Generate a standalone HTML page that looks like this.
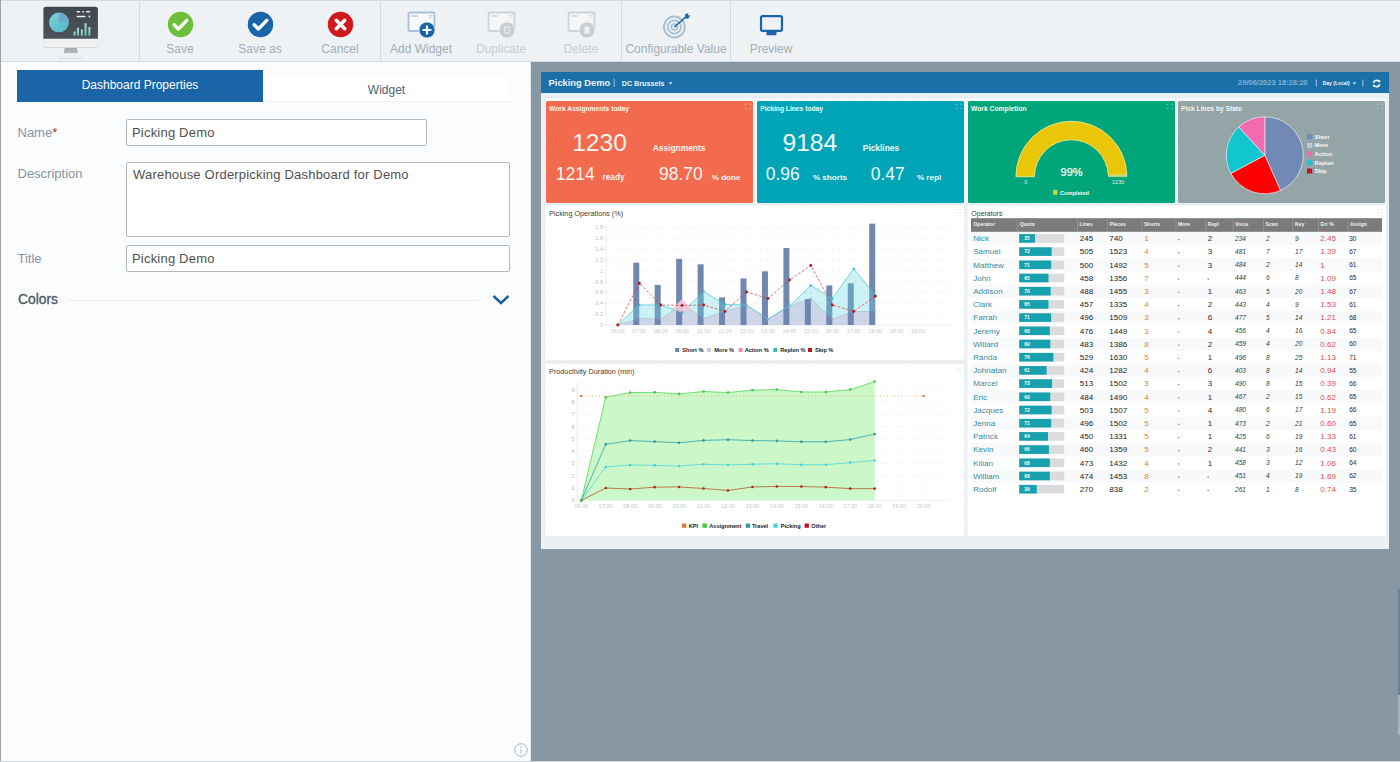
<!DOCTYPE html>
<html><head><meta charset="utf-8">
<style>
*{margin:0;padding:0;box-sizing:border-box}
html,body{width:1400px;height:762px;overflow:hidden;background:#8798a4;font-family:"Liberation Sans",sans-serif}
.a{position:absolute}
.t{position:absolute;white-space:nowrap;line-height:1}
#tb{left:0;top:0;width:1400px;height:62px;background:#eef2f5;border-top:1px solid #d6dbe0;border-bottom:1px solid #d3d9de}
.sep{position:absolute;top:1px;width:1px;height:60px;background:#d6dbe0}
.lbl{position:absolute;top:42px;font-size:12px;line-height:1;color:#a3adb7;text-align:center;white-space:nowrap}
#lp{left:0;top:62px;width:531px;height:700px;background:#fbfcfd;border-left:1px solid #8c8c8c;border-right:1px solid #e3e7eb}
.flab{position:absolute;left:16.5px;font-size:13px;line-height:1;color:#8794a0}
.inp{position:absolute;background:#fff;border:1px solid #b0bac2;border-radius:2px;font-size:13px;color:#505050;line-height:1;letter-spacing:.2px}
#db{left:541px;top:72px;width:848px;height:477px;background:#eef2f5}
#dbh{left:541px;top:72px;width:848px;height:21px;background:#1c6fab}
</style></head><body>

<!-- TOOLBAR -->
<div id="tb" class="a">
  <svg class="a" style="left:40px;top:1px" width="62" height="58" viewBox="0 0 62 58">
    <defs>
      <linearGradient id="scr" x1="0" y1="0" x2="0" y2="1"><stop offset="0" stop-color="#40474e"/><stop offset="1" stop-color="#4b5259"/></linearGradient>
      <linearGradient id="pie" x1="0" y1="0" x2="1" y2="1"><stop offset="0" stop-color="#7ed2da"/><stop offset="1" stop-color="#4fb8c6"/></linearGradient>
      <linearGradient id="bar" x1="0" y1="0" x2="0" y2="1"><stop offset="0" stop-color="#a6e2d6"/><stop offset="1" stop-color="#6cc0b0"/></linearGradient>
      <linearGradient id="std" x1="0" y1="0" x2="0" y2="1"><stop offset="0" stop-color="#9ea2a6"/><stop offset="1" stop-color="#b8bbbe"/></linearGradient>
    </defs>
    <rect x="18.5" y="52" width="24" height="5" rx="2.2" fill="#d9dcdf"/>
    <path d="M25 44.5 h11.5 l1.5 7 h-14.5 z" fill="url(#std)"/>
    <rect x="19" y="51.3" width="23.2" height="4.6" rx="2" fill="#eeeff0"/>
    <rect x="3.2" y="5" width="55" height="41" rx="2.5" fill="#d6d9dc"/>
    <rect x="3.4" y="4.8" width="54.5" height="40.3" rx="2.5" fill="#f1f1f2"/>
    <path d="M3.4 7.3 a2.5 2.5 0 0 1 2.5 -2.5 h49.5 a2.5 2.5 0 0 1 2.5 2.5 v29.4 h-54.5 z" fill="url(#scr)"/>
    <circle cx="19" cy="20.4" r="9.9" fill="url(#pie)"/>
    <path d="M19 20.4 v-9.9 a9.9 9.9 0 0 1 9.9 9.9 z" fill="#6fa9cc"/>
    <g fill="url(#bar)">
      <rect x="33.6" y="29.5" width="2" height="4.2"/>
      <rect x="37" y="25.7" width="2" height="8"/>
      <rect x="40.8" y="27.6" width="2" height="6.1"/>
      <rect x="44.6" y="21.2" width="2" height="12.5"/>
      <rect x="48.4" y="25" width="2" height="8.7"/>
    </g>
    <g fill="#eef1f3">
      <rect x="36.5" y="9" width="3.5" height="1.6" rx=".8"/>
      <rect x="42.4" y="9" width="1.4" height="1.6"/>
      <rect x="46" y="9" width="4.2" height="1.6" rx=".8"/>
      <rect x="36.5" y="13.7" width="9.1" height="1.6" rx=".8"/>
      <rect x="48.6" y="13.7" width="1.6" height="1.6"/>
    </g>
  </svg>
  <div class="sep" style="left:139px"></div>
  <!-- Save -->
  <svg class="a" style="left:167px;top:10px" width="27" height="27" viewBox="0 0 27 27"><circle cx="13.5" cy="13.5" r="12.7" fill="#6dbf3a"/><path d="M7.2 13.8 l4.2 4.2 l8.4 -8.6" fill="none" stroke="#fff" stroke-width="3.4" stroke-linecap="round" stroke-linejoin="round"/></svg>
  <div class="lbl" style="left:140px;width:80px">Save</div>
  <svg class="a" style="left:247px;top:10px" width="27" height="27" viewBox="0 0 27 27"><circle cx="13.5" cy="13.5" r="12.7" fill="#1a64a8"/><path d="M7.2 13.8 l4.2 4.2 l8.4 -8.6" fill="none" stroke="#fff" stroke-width="3.4" stroke-linecap="round" stroke-linejoin="round"/></svg>
  <div class="lbl" style="left:220px;width:80px">Save as</div>
  <svg class="a" style="left:327px;top:10px" width="27" height="27" viewBox="0 0 27 27"><circle cx="13.5" cy="13.5" r="12.7" fill="#d0191e"/><path d="M9.3 9.3 l8.4 8.4 M17.7 9.3 l-8.4 8.4" fill="none" stroke="#fff" stroke-width="3.6" stroke-linecap="round"/></svg>
  <div class="lbl" style="left:300px;width:80px">Cancel</div>
  <div class="sep" style="left:380px"></div>
  <!-- Add widget -->
  <svg class="a" style="left:405px;top:9px" width="34" height="30" viewBox="0 0 34 30">
    <rect x="3.5" y="2.5" width="26" height="18.5" rx="1.5" fill="#f7f9fb" stroke="#a9c0d6" stroke-width="1.8"/>
    <rect x="6" y="5.4" width="7" height="1.2" fill="#a9c0d6"/>
    <g fill="#a9c0d6"><rect x="24.3" y="5" width="1.2" height="1.2"/><rect x="26.3" y="5" width="1.2" height="1.2"/><rect x="24.3" y="7.2" width="1.2" height="1.2"/><rect x="26.3" y="7.2" width="1.2" height="1.2"/></g>
    <circle cx="22" cy="20" r="8" fill="#1a64a8" stroke="#eef1f4" stroke-width="0.8"/>
    <path d="M22 15.6 v8.8 M17.6 20 h8.8" stroke="#fff" stroke-width="2.2"/>
  </svg>
  <div class="lbl" style="left:381px;width:80px;color:#a3adb7">Add Widget</div>
  <svg class="a" style="left:485px;top:9px" width="34" height="30" viewBox="0 0 34 30">
    <rect x="3.5" y="2.5" width="26" height="18.5" rx="1.5" fill="#f4f6f8" stroke="#cfd3d7" stroke-width="1.8"/>
    <rect x="6" y="5.4" width="7" height="1.2" fill="#cfd3d7"/>
    <g fill="#cfd3d7"><rect x="24.3" y="5" width="1.2" height="1.2"/><rect x="26.3" y="5" width="1.2" height="1.2"/><rect x="24.3" y="7.2" width="1.2" height="1.2"/><rect x="26.3" y="7.2" width="1.2" height="1.2"/></g>
    <circle cx="22" cy="20" r="8" fill="#c9cdd1" stroke="#eef1f4" stroke-width="0.8"/>
    <rect x="19.3" y="16.5" width="5.4" height="7" fill="#eef1f4" />
    <rect x="20.3" y="17.5" width="3.4" height="5" fill="#c9cdd1"/>
  </svg>
  <div class="lbl" style="left:461px;width:80px;color:#c8cdd2">Duplicate</div>
  <svg class="a" style="left:565px;top:9px" width="34" height="30" viewBox="0 0 34 30">
    <rect x="3.5" y="2.5" width="26" height="18.5" rx="1.5" fill="#f4f6f8" stroke="#cfd3d7" stroke-width="1.8"/>
    <rect x="6" y="5.4" width="7" height="1.2" fill="#cfd3d7"/>
    <g fill="#cfd3d7"><rect x="24.3" y="5" width="1.2" height="1.2"/><rect x="26.3" y="5" width="1.2" height="1.2"/><rect x="24.3" y="7.2" width="1.2" height="1.2"/><rect x="26.3" y="7.2" width="1.2" height="1.2"/></g>
    <circle cx="22" cy="20" r="8" fill="#c9cdd1" stroke="#eef1f4" stroke-width="0.8"/>
    <rect x="19.5" y="16.5" width="5" height="7" rx="0.6" fill="#eef1f4"/>
  </svg>
  <div class="lbl" style="left:541px;width:80px;color:#c8cdd2">Delete</div>
  <div class="sep" style="left:621px"></div>
  <svg class="a" style="left:660px;top:10px" width="32" height="30" viewBox="0 0 32 30">
    <circle cx="14.4" cy="16" r="10.4" fill="none" stroke="#a9bfd2" stroke-width="2"/>
    <circle cx="14.4" cy="16" r="6.6" fill="none" stroke="#a9bfd2" stroke-width="1.8"/>
    <circle cx="14.4" cy="16" r="3" fill="none" stroke="#a9bfd2" stroke-width="1.6"/>
    <path d="M14.4 16 L27.5 4.5" stroke="#1a64a8" stroke-width="1.6"/>
    <path d="M25 3.5 l3.3 -1.5 l-0.3 2.3 l2.3 0.2 l-2.2 3.3 l-2.6 -0.3 z" fill="#1a64a8"/>
  </svg>
  <div class="lbl" style="left:622px;width:108px">Configurable Value</div>
  <div class="sep" style="left:730px"></div>
  <svg class="a" style="left:758px;top:12px" width="27" height="25" viewBox="0 0 27 25">
    <rect x="3" y="3.2" width="21" height="14.6" rx="1.6" fill="none" stroke="#1a64a8" stroke-width="2.2"/>
    <rect x="8.5" y="18.6" width="10" height="3.6" rx="0.8" fill="#1a64a8"/>
  </svg>
  <div class="lbl" style="left:731px;width:80px">Preview</div>
</div>

<!-- LEFT PANEL -->
<div id="lp" class="a">
  <div class="a" style="left:16px;top:8px;width:246px;height:32px;background:#1a64a8"></div>
  <div class="t" style="left:16px;top:17px;width:246px;text-align:center;font-size:12px;color:#fff">Dashboard Properties</div>
  <div class="a" style="left:262px;top:16px;width:247px;height:24px;background:#fff;border-bottom:1px solid #eef0f2"></div>
  <div class="t" style="left:262px;top:22px;width:247px;text-align:center;font-size:12px;color:#4f6275">Widget</div>

  <div class="flab" style="top:64px">Name<span style="color:#b03030">*</span></div>
  <div class="inp" style="left:125px;top:57px;width:300.5px;height:27px"><span class="t" style="left:5px;top:6px">Picking Demo</span></div>

  <div class="flab" style="top:105px">Description</div>
  <div class="inp" style="left:125px;top:100px;width:383.5px;height:75px"><span class="t" style="left:6px;top:5px">Warehouse Orderpicking Dashboard for Demo</span></div>

  <div class="flab" style="top:190px">Title</div>
  <div class="inp" style="left:125px;top:183px;width:383.5px;height:27px"><span class="t" style="left:5px;top:6px">Picking Demo</span></div>

  <div class="t" style="left:17px;top:230.8px;font-size:13.8px;color:#4e5b68;-webkit-text-stroke:0.35px #4e5b68">Colors</div>
  <div class="a" style="left:66px;top:238px;width:412px;height:1px;background:#eceef1"></div>
  <svg class="a" style="left:490px;top:231px" width="20" height="14" viewBox="0 0 20 14"><path d="M2.5 3 l7.5 7 l7.5 -7" fill="none" stroke="#1f5f96" stroke-width="2.4"/></svg>

  <svg class="a" style="left:512px;top:680px" width="16" height="16" viewBox="0 0 16 16"><circle cx="8" cy="8" r="6.3" fill="none" stroke="#a9b6c1" stroke-width="1"/><rect x="7.5" y="6.8" width="1" height="4.4" fill="#aab7c2"/><circle cx="8" cy="5" r=".7" fill="#aab7c2"/></svg>
</div>

<!-- DASHBOARD -->
<div class="a" style="left:0;top:0;width:1px;height:762px;background:#9ea3a7"></div>
<div class="a" style="left:0;top:761px;width:1400px;height:1px;background:#cfd4d8"></div>
<div class="a" style="left:1398px;top:589px;width:2px;height:106px;background:#6f808e"></div>
<div class="a" style="left:1398px;top:695px;width:2px;height:40px;background:#a8b4bc"></div>
<svg class="a" style="left:0;top:0" width="1400" height="762" viewBox="0 0 1400 762" font-family='"Liberation Sans",sans-serif'>
<rect x="541.00" y="72.00" width="848.00" height="477.00" rx="0" fill="#ecf0f3" />
<rect x="541.00" y="93.00" width="848.00" height="6.00" rx="0" fill="#e6f0f6" />
<rect x="544.50" y="97.50" width="841.50" height="438.50" rx="0" fill="#f7f9fa" stroke="#d2d6db" stroke-width="0.8" stroke-dasharray="1.2 2"/>
<rect x="541.00" y="72.00" width="848.00" height="21.00" rx="0" fill="#1b71a7" />
<text x="548.60" y="86.00" font-size="9.3" fill="#eaf4fb" font-weight="bold" text-anchor="start" font-style="normal" >Picking Demo</text>
<rect x="613.60" y="78.50" width="1.00" height="8.50" rx="0" fill="#8cc0e3" />
<text x="621.70" y="86.00" font-size="7.2" fill="#e8f2fa" font-weight="bold" text-anchor="start" font-style="normal" >DC Brussels</text>
<path d="M668.6 82.3 h4 l-2 2.3 z" fill="#d8e8f5"/>
<text x="1238.10" y="85.20" font-size="7.5" fill="#7eb2da" font-weight="bold" text-anchor="start" font-style="normal" >29/06/2023 18:28:20</text>
<rect x="1315.80" y="79.50" width="1.00" height="7.00" rx="0" fill="#9ccbea" />
<text x="1322.70" y="85.20" font-size="5.0" fill="#f0f6fb" font-weight="bold" text-anchor="start" font-style="normal" >Day (Local)</text>
<path d="M1352.6 82.4 h3.8 l-1.9 2.1 z" fill="#e8f2fa"/>
<rect x="1362.40" y="79.50" width="1.00" height="7.00" rx="0" fill="#9ccbea" />
<g fill="none" stroke="#f4f8fb" stroke-width="1.6"><path d="M1373.5 82.8 a3.3 3.3 0 0 1 6.0 -0.9"/><path d="M1379.8 84.2 a3.3 3.3 0 0 1 -6.0 0.9"/></g>
<path d="M1378.2 80.2 l2.4 0.2 l-0.6 2.5 z M1375.2 86.8 l-2.4 -0.2 l0.6 -2.5 z" fill="#f4f8fb"/>
<rect x="546.00" y="101.00" width="207.00" height="102.00" rx="1.5" fill="#f36b4e" />
<g fill="none" stroke="rgba(255,255,255,0.45)" stroke-width="0.6"><path d="M745.2 105.5 v-1.5 h1.5 M749.2 104 h1.5 v1.5 M750.7 107.5 v1.5 h-1.5 M746.7 109 h-1.5 v-1.5"/></g>
<rect x="757.00" y="101.00" width="207.00" height="102.00" rx="1.5" fill="#00a4b7" />
<g fill="none" stroke="rgba(255,255,255,0.45)" stroke-width="0.6"><path d="M956.2 105.5 v-1.5 h1.5 M960.2 104 h1.5 v1.5 M961.7 107.5 v1.5 h-1.5 M957.7 109 h-1.5 v-1.5"/></g>
<rect x="968.00" y="101.00" width="207.00" height="102.00" rx="1.5" fill="#00a67a" />
<g fill="none" stroke="rgba(255,255,255,0.45)" stroke-width="0.6"><path d="M1167.2 105.5 v-1.5 h1.5 M1171.2 104 h1.5 v1.5 M1172.7 107.5 v1.5 h-1.5 M1168.7 109 h-1.5 v-1.5"/></g>
<rect x="1178.00" y="101.00" width="207.00" height="102.00" rx="1.5" fill="#93a5a7" />
<g fill="none" stroke="rgba(255,255,255,0.45)" stroke-width="0.6"><path d="M1377.2 105.5 v-1.5 h1.5 M1381.2 104 h1.5 v1.5 M1382.7 107.5 v1.5 h-1.5 M1378.7 109 h-1.5 v-1.5"/></g>
<text x="549.10" y="111.00" font-size="6.7" fill="#fdf3ef" font-weight="bold" text-anchor="start" font-style="normal" >Work Assignments today</text>
<text x="572.20" y="150.80" font-size="24.6" fill="#fdf3ef" font-weight="normal" text-anchor="start" font-style="normal" >1230</text>
<text x="652.80" y="150.80" font-size="8.4" fill="#fdf3ef" font-weight="bold" text-anchor="start" font-style="normal" >Assignments</text>
<text x="555.70" y="180.00" font-size="17.5" fill="#fdf3ef" font-weight="normal" text-anchor="start" font-style="normal" >1214</text>
<text x="602.50" y="180.00" font-size="8.25" fill="#fdf3ef" font-weight="bold" text-anchor="start" font-style="normal" >ready</text>
<text x="659.00" y="180.00" font-size="17.5" fill="#fdf3ef" font-weight="normal" text-anchor="start" font-style="normal" >98.70</text>
<text x="711.70" y="180.00" font-size="8.1" fill="#fdf3ef" font-weight="bold" text-anchor="start" font-style="normal" >% done</text>
<text x="760.20" y="111.00" font-size="6.7" fill="#eefafc" font-weight="bold" text-anchor="start" font-style="normal" >Picking Lines today</text>
<text x="782.50" y="150.80" font-size="24.6" fill="#eefafc" font-weight="normal" text-anchor="start" font-style="normal" >9184</text>
<text x="862.80" y="150.80" font-size="8.4" fill="#eefafc" font-weight="bold" text-anchor="start" font-style="normal" >Picklines</text>
<text x="765.70" y="180.00" font-size="17.5" fill="#eefafc" font-weight="normal" text-anchor="start" font-style="normal" >0.96</text>
<text x="812.90" y="180.00" font-size="8.1" fill="#eefafc" font-weight="bold" text-anchor="start" font-style="normal" >% shorts</text>
<text x="870.70" y="180.00" font-size="17.5" fill="#eefafc" font-weight="normal" text-anchor="start" font-style="normal" >0.47</text>
<text x="916.90" y="180.00" font-size="8.1" fill="#eefafc" font-weight="bold" text-anchor="start" font-style="normal" >% repl</text>
<path d="M1015.90 176.70 A55.5 55.5 0 0 1 1126.87 174.96 L1108.38 175.54 A37.0 37.0 0 0 0 1034.40 176.70 Z" fill="#eac60a" stroke="#e4ee88" stroke-width="0.9"/>
<path d="M1126.87 174.96 A55.5 55.5 0 0 1 1126.90 176.70 L1108.40 176.70 A37.0 37.0 0 0 0 1108.38 175.54 Z" fill="#b9d9a8" stroke="#cfe27a" stroke-width="0.5"/>
<text x="1071.60" y="176.20" font-size="11" fill="#f3fbf6" font-weight="normal" text-anchor="middle" font-style="normal" stroke="#f3fbf6" stroke-width="0.25">99%</text>
<text x="1025.70" y="183.50" font-size="5.5" fill="#e0f2ea" font-weight="normal" text-anchor="middle" font-style="normal" >0</text>
<text x="1118.20" y="183.50" font-size="5.5" fill="#e0f2ea" font-weight="normal" text-anchor="middle" font-style="normal" >1230</text>
<rect x="1053.20" y="190.00" width="4.20" height="4.80" rx="0" fill="#d3d63a" />
<text x="1060.00" y="194.60" font-size="5.6" fill="#f3fbf6" font-weight="bold" text-anchor="start" font-style="normal" >Completed</text>
<text x="971.00" y="111.00" font-size="6.74" fill="#f0faf5" font-weight="bold" text-anchor="start" font-style="normal" >Work Completion</text>
<text x="1181.00" y="111.00" font-size="6.7" fill="#f4f6f6" font-weight="bold" text-anchor="start" font-style="normal" >Pick Lines by State</text>
<path d="M1264.8 155.3 L1264.80 116.80 A38.5 38.5 0 0 1 1280.46 190.47 Z" fill="#7189b4" stroke="#e9eef0" stroke-width="0.7"/>
<path d="M1264.8 155.3 L1280.46 190.47 A38.5 38.5 0 0 1 1230.81 173.37 Z" fill="#ff0000" stroke="#e9eef0" stroke-width="0.7"/>
<path d="M1264.8 155.3 L1230.81 173.37 A38.5 38.5 0 0 1 1238.79 126.91 Z" fill="#12c6cf" stroke="#e9eef0" stroke-width="0.7"/>
<path d="M1264.8 155.3 L1238.79 126.91 A38.5 38.5 0 0 1 1264.80 116.80 Z" fill="#f36aae" stroke="#e9eef0" stroke-width="0.7"/>
<rect x="1307.00" y="134.30" width="5.20" height="5.00" rx="0" fill="#7189b4" />
<text x="1314.60" y="138.90" font-size="5.7" fill="#f7f9f9" font-weight="bold" text-anchor="start" font-style="normal" >Short</text>
<rect x="1307.00" y="142.85" width="5.20" height="5.00" rx="0" fill="#c3c8d8" />
<text x="1314.60" y="147.45" font-size="5.7" fill="#f7f9f9" font-weight="bold" text-anchor="start" font-style="normal" >More</text>
<rect x="1307.00" y="151.40" width="5.20" height="5.00" rx="0" fill="#f36aae" />
<text x="1314.60" y="156.00" font-size="5.7" fill="#f7f9f9" font-weight="bold" text-anchor="start" font-style="normal" >Action</text>
<rect x="1307.00" y="159.95" width="5.20" height="5.00" rx="0" fill="#12c6cf" />
<text x="1314.60" y="164.55" font-size="5.7" fill="#f7f9f9" font-weight="bold" text-anchor="start" font-style="normal" >Replen</text>
<rect x="1307.00" y="168.50" width="5.20" height="5.00" rx="0" fill="#c0141a" />
<text x="1314.60" y="173.10" font-size="5.7" fill="#f7f9f9" font-weight="bold" text-anchor="start" font-style="normal" >Skip</text>
<rect x="544.50" y="203.00" width="841.50" height="2.50" rx="0" fill="#e9f3f6" />
<rect x="545.00" y="360.00" width="420.00" height="4.00" rx="0" fill="#edf1f4" />
<rect x="964.00" y="203.00" width="4.00" height="333.00" rx="0" fill="#f1f4f6" />
<path d="M754.6 97.5 V203 M965.4 97.5 V536 M1176.5 97.5 V203 M544.5 204.3 H1386 M545 361.8 H965" stroke="#cdd2d7" stroke-width="0.8" stroke-dasharray="1.1 2" fill="none"/>
<rect x="546.00" y="205.50" width="418.00" height="154.50" rx="0" fill="#ffffff" />
<rect x="546.00" y="364.00" width="418.00" height="172.00" rx="0" fill="#ffffff" />
<rect x="968.00" y="205.50" width="417.50" height="330.50" rx="0" fill="#ffffff" />
<rect x="956.30" y="209.30" width="1.00" height="1.00" rx="0" fill="#c8ccd0" />
<rect x="956.30" y="212.50" width="1.00" height="1.00" rx="0" fill="#c8ccd0" />
<rect x="959.50" y="209.30" width="1.00" height="1.00" rx="0" fill="#c8ccd0" />
<rect x="959.50" y="212.50" width="1.00" height="1.00" rx="0" fill="#c8ccd0" />
<rect x="956.30" y="367.80" width="1.00" height="1.00" rx="0" fill="#c8ccd0" />
<rect x="956.30" y="371.00" width="1.00" height="1.00" rx="0" fill="#c8ccd0" />
<rect x="959.50" y="367.80" width="1.00" height="1.00" rx="0" fill="#c8ccd0" />
<rect x="959.50" y="371.00" width="1.00" height="1.00" rx="0" fill="#c8ccd0" />
<rect x="1377.50" y="209.30" width="1.00" height="1.00" rx="0" fill="#c8ccd0" />
<rect x="1377.50" y="212.50" width="1.00" height="1.00" rx="0" fill="#c8ccd0" />
<rect x="1380.70" y="209.30" width="1.00" height="1.00" rx="0" fill="#c8ccd0" />
<rect x="1380.70" y="212.50" width="1.00" height="1.00" rx="0" fill="#c8ccd0" />
<text x="549.10" y="215.60" font-size="7.24" fill="#3d3d3d" font-weight="normal" text-anchor="start" font-style="normal" >Picking Operations (%)</text>
<path d="M606.0 314.16 H950.5 M606.0 303.32 H950.5 M606.0 292.48 H950.5 M606.0 281.64 H950.5 M606.0 270.80 H950.5 M606.0 259.96 H950.5 M606.0 249.12 H950.5 M606.0 238.28 H950.5 M606.0 227.44 H950.5" stroke="#ececec" stroke-width="0.6" stroke-dasharray="3 2.5" fill="none"/>
<path d="M617.80 224.73 V325.0 M639.25 224.73 V325.0 M660.70 224.73 V325.0 M682.15 224.73 V325.0 M703.60 224.73 V325.0 M725.05 224.73 V325.0 M746.50 224.73 V325.0 M767.95 224.73 V325.0 M789.40 224.73 V325.0 M810.85 224.73 V325.0 M832.30 224.73 V325.0 M853.75 224.73 V325.0 M875.20 224.73 V325.0 M896.65 224.73 V325.0 M918.10 224.73 V325.0" stroke="#f0f0f0" stroke-width="0.5" stroke-dasharray="2 2" fill="none"/>
<path d="M606.0 223 V326.0 M604.0 325.0 H950.5" stroke="#e6e8ea" stroke-width="0.8" fill="none"/>
<text x="603.00" y="327.00" font-size="5.5" fill="#b9bdc1" font-weight="normal" text-anchor="end" font-style="normal" >0</text>
<path d="M604.0 325.00 h2" stroke="#e0e2e4" stroke-width="0.6"/>
<text x="603.00" y="316.16" font-size="5.5" fill="#b9bdc1" font-weight="normal" text-anchor="end" font-style="normal" >0.2</text>
<path d="M604.0 314.16 h2" stroke="#e0e2e4" stroke-width="0.6"/>
<text x="603.00" y="305.32" font-size="5.5" fill="#b9bdc1" font-weight="normal" text-anchor="end" font-style="normal" >0.4</text>
<path d="M604.0 303.32 h2" stroke="#e0e2e4" stroke-width="0.6"/>
<text x="603.00" y="294.48" font-size="5.5" fill="#b9bdc1" font-weight="normal" text-anchor="end" font-style="normal" >0.6</text>
<path d="M604.0 292.48 h2" stroke="#e0e2e4" stroke-width="0.6"/>
<text x="603.00" y="283.64" font-size="5.5" fill="#b9bdc1" font-weight="normal" text-anchor="end" font-style="normal" >0.8</text>
<path d="M604.0 281.64 h2" stroke="#e0e2e4" stroke-width="0.6"/>
<text x="603.00" y="272.80" font-size="5.5" fill="#b9bdc1" font-weight="normal" text-anchor="end" font-style="normal" >1</text>
<path d="M604.0 270.80 h2" stroke="#e0e2e4" stroke-width="0.6"/>
<text x="603.00" y="261.96" font-size="5.5" fill="#b9bdc1" font-weight="normal" text-anchor="end" font-style="normal" >1.2</text>
<path d="M604.0 259.96 h2" stroke="#e0e2e4" stroke-width="0.6"/>
<text x="603.00" y="251.12" font-size="5.5" fill="#b9bdc1" font-weight="normal" text-anchor="end" font-style="normal" >1.4</text>
<path d="M604.0 249.12 h2" stroke="#e0e2e4" stroke-width="0.6"/>
<text x="603.00" y="240.28" font-size="5.5" fill="#b9bdc1" font-weight="normal" text-anchor="end" font-style="normal" >1.6</text>
<path d="M604.0 238.28 h2" stroke="#e0e2e4" stroke-width="0.6"/>
<text x="603.00" y="229.44" font-size="5.5" fill="#b9bdc1" font-weight="normal" text-anchor="end" font-style="normal" >1.8</text>
<path d="M604.0 227.44 h2" stroke="#e0e2e4" stroke-width="0.6"/>
<text x="617.80" y="332.80" font-size="5.5" fill="#c3c7cb" font-weight="normal" text-anchor="middle" font-style="normal" >06:00</text>
<text x="639.25" y="332.80" font-size="5.5" fill="#c3c7cb" font-weight="normal" text-anchor="middle" font-style="normal" >07:00</text>
<text x="660.70" y="332.80" font-size="5.5" fill="#c3c7cb" font-weight="normal" text-anchor="middle" font-style="normal" >08:00</text>
<text x="682.15" y="332.80" font-size="5.5" fill="#c3c7cb" font-weight="normal" text-anchor="middle" font-style="normal" >09:00</text>
<text x="703.60" y="332.80" font-size="5.5" fill="#c3c7cb" font-weight="normal" text-anchor="middle" font-style="normal" >10:00</text>
<text x="725.05" y="332.80" font-size="5.5" fill="#c3c7cb" font-weight="normal" text-anchor="middle" font-style="normal" >11:00</text>
<text x="746.50" y="332.80" font-size="5.5" fill="#c3c7cb" font-weight="normal" text-anchor="middle" font-style="normal" >12:00</text>
<text x="767.95" y="332.80" font-size="5.5" fill="#c3c7cb" font-weight="normal" text-anchor="middle" font-style="normal" >13:00</text>
<text x="789.40" y="332.80" font-size="5.5" fill="#c3c7cb" font-weight="normal" text-anchor="middle" font-style="normal" >14:00</text>
<text x="810.85" y="332.80" font-size="5.5" fill="#c3c7cb" font-weight="normal" text-anchor="middle" font-style="normal" >15:00</text>
<text x="832.30" y="332.80" font-size="5.5" fill="#c3c7cb" font-weight="normal" text-anchor="middle" font-style="normal" >16:00</text>
<text x="853.75" y="332.80" font-size="5.5" fill="#c3c7cb" font-weight="normal" text-anchor="middle" font-style="normal" >17:00</text>
<text x="875.20" y="332.80" font-size="5.5" fill="#c3c7cb" font-weight="normal" text-anchor="middle" font-style="normal" >18:00</text>
<text x="896.65" y="332.80" font-size="5.5" fill="#c3c7cb" font-weight="normal" text-anchor="middle" font-style="normal" >19:00</text>
<text x="918.10" y="332.80" font-size="5.5" fill="#c3c7cb" font-weight="normal" text-anchor="middle" font-style="normal" >20:00</text>
<polygon points="617.80,325.0 617.80,325.00 639.25,318.50 660.70,319.04 682.15,304.40 703.60,318.50 725.05,311.45 746.50,305.49 767.95,319.04 789.40,306.03 810.85,298.44 832.30,319.04 853.75,311.45 875.20,311.45 875.20,325.0" fill="#cdd6e6" fill-opacity="1" stroke="none"/>
<polyline points="617.80,325.00 639.25,318.50 660.70,319.04 682.15,304.40 703.60,318.50 725.05,311.45 746.50,305.49 767.95,319.04 789.40,306.03 810.85,298.44 832.30,319.04 853.75,311.45 875.20,311.45" fill="none" stroke="#a9b2cc" stroke-width="0.6"/>
<rect x="633.25" y="262.67" width="6.00" height="62.33" rx="0" fill="#7087b0" />
<rect x="654.70" y="284.89" width="6.00" height="40.11" rx="0" fill="#7087b0" />
<rect x="676.15" y="258.88" width="6.00" height="66.12" rx="0" fill="#7087b0" />
<rect x="697.60" y="264.30" width="6.00" height="60.70" rx="0" fill="#7087b0" />
<rect x="719.05" y="297.36" width="6.00" height="27.64" rx="0" fill="#7087b0" />
<rect x="740.50" y="278.39" width="6.00" height="46.61" rx="0" fill="#7087b0" />
<rect x="761.95" y="271.34" width="6.00" height="53.66" rx="0" fill="#7087b0" />
<rect x="783.40" y="248.04" width="6.00" height="76.96" rx="0" fill="#7087b0" />
<rect x="804.85" y="298.98" width="6.00" height="26.02" rx="0" fill="#7087b0" />
<rect x="826.30" y="285.43" width="6.00" height="39.57" rx="0" fill="#7087b0" />
<rect x="847.75" y="283.27" width="6.00" height="41.73" rx="0" fill="#7087b0" />
<rect x="869.20" y="223.65" width="6.00" height="101.35" rx="0" fill="#7087b0" />
<polygon points="617.80,325.00 639.25,304.95 660.70,304.95 674.30,309.76 682.15,304.40 687.10,307.66 703.60,291.40 725.05,304.40 746.50,304.95 767.95,319.04 789.40,306.03 810.85,285.43 832.30,298.44 853.75,268.63 875.20,295.19 875.20,311.45 853.75,311.45 832.30,319.04 810.85,298.44 789.40,306.03 767.95,319.04 746.50,305.49 725.05,311.45 703.60,318.50 682.15,304.40 660.70,319.04 639.25,318.50 617.80,325.00" fill="#5fd6df" fill-opacity="0.32"/>
<polyline points="617.80,325.00 639.25,304.95 660.70,304.95 682.15,312.53 703.60,291.40 725.05,304.40 746.50,304.95 767.95,319.04 789.40,306.03 810.85,285.43 832.30,298.44 853.75,268.63 875.20,295.19" fill="none" stroke="#45c3ce" stroke-width="0.7"/>
<polygon points="672.5,309 682.15,298.98 691.5,309 682.15,312" fill="#f7c9df" fill-opacity="0.85" stroke="#f2b4d0" stroke-width="0.4"/>
<circle cx="617.80" cy="325.00" r="1.2" fill="#3fb8c6"/>
<circle cx="639.25" cy="304.95" r="1.2" fill="#3fb8c6"/>
<circle cx="660.70" cy="304.95" r="1.2" fill="#3fb8c6"/>
<circle cx="682.15" cy="312.53" r="1.2" fill="#3fb8c6"/>
<circle cx="703.60" cy="291.40" r="1.2" fill="#3fb8c6"/>
<circle cx="725.05" cy="304.40" r="1.2" fill="#3fb8c6"/>
<circle cx="746.50" cy="304.95" r="1.2" fill="#3fb8c6"/>
<circle cx="767.95" cy="319.04" r="1.2" fill="#3fb8c6"/>
<circle cx="789.40" cy="306.03" r="1.2" fill="#3fb8c6"/>
<circle cx="810.85" cy="285.43" r="1.2" fill="#3fb8c6"/>
<circle cx="832.30" cy="298.44" r="1.2" fill="#3fb8c6"/>
<circle cx="853.75" cy="268.63" r="1.2" fill="#3fb8c6"/>
<circle cx="875.20" cy="295.19" r="1.2" fill="#3fb8c6"/>
<circle cx="617.80" cy="325.00" r="1" fill="#b8a8c8"/>
<circle cx="639.25" cy="318.50" r="1" fill="#b8a8c8"/>
<circle cx="660.70" cy="319.04" r="1" fill="#b8a8c8"/>
<circle cx="682.15" cy="304.40" r="1" fill="#b8a8c8"/>
<circle cx="703.60" cy="318.50" r="1" fill="#b8a8c8"/>
<circle cx="725.05" cy="311.45" r="1" fill="#b8a8c8"/>
<circle cx="746.50" cy="305.49" r="1" fill="#b8a8c8"/>
<circle cx="767.95" cy="319.04" r="1" fill="#b8a8c8"/>
<circle cx="789.40" cy="306.03" r="1" fill="#b8a8c8"/>
<circle cx="810.85" cy="298.44" r="1" fill="#b8a8c8"/>
<circle cx="832.30" cy="319.04" r="1" fill="#b8a8c8"/>
<circle cx="853.75" cy="311.45" r="1" fill="#b8a8c8"/>
<circle cx="875.20" cy="311.45" r="1" fill="#b8a8c8"/>
<polyline points="617.80,325.00 639.25,283.27 660.70,304.95 682.15,305.49 703.60,304.95 725.05,311.45 746.50,291.94 767.95,298.44 789.40,280.01 810.85,265.38 832.30,304.95 853.75,311.45 875.20,296.27" fill="none" stroke="#d04848" stroke-width="0.8" stroke-dasharray="2.6 1.8"/>
<circle cx="617.80" cy="325.00" r="1.45" fill="#b01c24"/>
<circle cx="639.25" cy="283.27" r="1.45" fill="#b01c24"/>
<circle cx="660.70" cy="304.95" r="1.45" fill="#b01c24"/>
<circle cx="682.15" cy="305.49" r="1.45" fill="#b01c24"/>
<circle cx="703.60" cy="304.95" r="1.45" fill="#b01c24"/>
<circle cx="725.05" cy="311.45" r="1.45" fill="#b01c24"/>
<circle cx="746.50" cy="291.94" r="1.45" fill="#b01c24"/>
<circle cx="767.95" cy="298.44" r="1.45" fill="#b01c24"/>
<circle cx="789.40" cy="280.01" r="1.45" fill="#b01c24"/>
<circle cx="810.85" cy="265.38" r="1.45" fill="#b01c24"/>
<circle cx="832.30" cy="304.95" r="1.45" fill="#b01c24"/>
<circle cx="853.75" cy="311.45" r="1.45" fill="#b01c24"/>
<circle cx="875.20" cy="296.27" r="1.45" fill="#b01c24"/>
<rect x="675.20" y="348.00" width="4.00" height="4.00" rx="0" fill="#6f86ad" />
<text x="682.30" y="352.00" font-size="5.6" fill="#222" font-weight="bold" text-anchor="start" font-style="normal" >Short %</text>
<rect x="707.00" y="348.00" width="4.00" height="4.00" rx="0" fill="#c6ccdc" />
<text x="714.20" y="352.00" font-size="5.6" fill="#222" font-weight="bold" text-anchor="start" font-style="normal" >More %</text>
<rect x="738.60" y="348.00" width="4.00" height="4.00" rx="0" fill="#e890b8" />
<text x="744.70" y="352.00" font-size="5.6" fill="#222" font-weight="bold" text-anchor="start" font-style="normal" >Action %</text>
<rect x="773.20" y="348.00" width="4.00" height="4.00" rx="0" fill="#3bb8c6" />
<text x="780.30" y="352.00" font-size="5.6" fill="#222" font-weight="bold" text-anchor="start" font-style="normal" >Replen %</text>
<rect x="808.00" y="348.00" width="4.00" height="4.00" rx="0" fill="#c0141a" />
<text x="815.00" y="352.00" font-size="5.6" fill="#222" font-weight="bold" text-anchor="start" font-style="normal" >Skip %</text>
<text x="549.10" y="374.20" font-size="7.24" fill="#3d3d3d" font-weight="normal" text-anchor="start" font-style="normal" >Productivity Duration (min)</text>
<path d="M577.3 488.03 H950.7 M577.3 475.76 H950.7 M577.3 463.49 H950.7 M577.3 451.22 H950.7 M577.3 438.95 H950.7 M577.3 426.68 H950.7 M577.3 414.41 H950.7 M577.3 402.14 H950.7 M577.3 389.87 H950.7" stroke="#ececec" stroke-width="0.6" stroke-dasharray="3 2.5" fill="none"/>
<path d="M581.30 381.28 V500.3 M605.75 381.28 V500.3 M630.20 381.28 V500.3 M654.65 381.28 V500.3 M679.10 381.28 V500.3 M703.55 381.28 V500.3 M728.00 381.28 V500.3 M752.45 381.28 V500.3 M776.90 381.28 V500.3 M801.35 381.28 V500.3 M825.80 381.28 V500.3 M850.25 381.28 V500.3 M874.70 381.28 V500.3 M899.15 381.28 V500.3 M923.60 381.28 V500.3" stroke="#f0f0f0" stroke-width="0.5" stroke-dasharray="2 2" fill="none"/>
<path d="M577.3 382 V501.3 M575.3 500.3 H950.7" stroke="#e6e8ea" stroke-width="0.8" fill="none"/>
<text x="574.50" y="502.30" font-size="5.5" fill="#b9bdc1" font-weight="normal" text-anchor="end" font-style="normal" >0</text>
<text x="574.50" y="490.03" font-size="5.5" fill="#b9bdc1" font-weight="normal" text-anchor="end" font-style="normal" >1</text>
<text x="574.50" y="477.76" font-size="5.5" fill="#b9bdc1" font-weight="normal" text-anchor="end" font-style="normal" >2</text>
<text x="574.50" y="465.49" font-size="5.5" fill="#b9bdc1" font-weight="normal" text-anchor="end" font-style="normal" >3</text>
<text x="574.50" y="453.22" font-size="5.5" fill="#b9bdc1" font-weight="normal" text-anchor="end" font-style="normal" >4</text>
<text x="574.50" y="440.95" font-size="5.5" fill="#b9bdc1" font-weight="normal" text-anchor="end" font-style="normal" >5</text>
<text x="574.50" y="428.68" font-size="5.5" fill="#b9bdc1" font-weight="normal" text-anchor="end" font-style="normal" >6</text>
<text x="574.50" y="416.41" font-size="5.5" fill="#b9bdc1" font-weight="normal" text-anchor="end" font-style="normal" >7</text>
<text x="574.50" y="404.14" font-size="5.5" fill="#b9bdc1" font-weight="normal" text-anchor="end" font-style="normal" >8</text>
<text x="574.50" y="391.87" font-size="5.5" fill="#b9bdc1" font-weight="normal" text-anchor="end" font-style="normal" >9</text>
<text x="581.30" y="508.20" font-size="5.5" fill="#c3c7cb" font-weight="normal" text-anchor="middle" font-style="normal" >06:00</text>
<text x="605.75" y="508.20" font-size="5.5" fill="#c3c7cb" font-weight="normal" text-anchor="middle" font-style="normal" >07:00</text>
<text x="630.20" y="508.20" font-size="5.5" fill="#c3c7cb" font-weight="normal" text-anchor="middle" font-style="normal" >08:00</text>
<text x="654.65" y="508.20" font-size="5.5" fill="#c3c7cb" font-weight="normal" text-anchor="middle" font-style="normal" >09:00</text>
<text x="679.10" y="508.20" font-size="5.5" fill="#c3c7cb" font-weight="normal" text-anchor="middle" font-style="normal" >10:00</text>
<text x="703.55" y="508.20" font-size="5.5" fill="#c3c7cb" font-weight="normal" text-anchor="middle" font-style="normal" >11:00</text>
<text x="728.00" y="508.20" font-size="5.5" fill="#c3c7cb" font-weight="normal" text-anchor="middle" font-style="normal" >12:00</text>
<text x="752.45" y="508.20" font-size="5.5" fill="#c3c7cb" font-weight="normal" text-anchor="middle" font-style="normal" >13:00</text>
<text x="776.90" y="508.20" font-size="5.5" fill="#c3c7cb" font-weight="normal" text-anchor="middle" font-style="normal" >14:00</text>
<text x="801.35" y="508.20" font-size="5.5" fill="#c3c7cb" font-weight="normal" text-anchor="middle" font-style="normal" >15:00</text>
<text x="825.80" y="508.20" font-size="5.5" fill="#c3c7cb" font-weight="normal" text-anchor="middle" font-style="normal" >16:00</text>
<text x="850.25" y="508.20" font-size="5.5" fill="#c3c7cb" font-weight="normal" text-anchor="middle" font-style="normal" >17:00</text>
<text x="874.70" y="508.20" font-size="5.5" fill="#c3c7cb" font-weight="normal" text-anchor="middle" font-style="normal" >18:00</text>
<text x="899.15" y="508.20" font-size="5.5" fill="#c3c7cb" font-weight="normal" text-anchor="middle" font-style="normal" >19:00</text>
<text x="923.60" y="508.20" font-size="5.5" fill="#c3c7cb" font-weight="normal" text-anchor="middle" font-style="normal" >20:00</text>
<polygon points="581.30,500.3 581.30,500.30 605.75,397.23 630.20,392.57 654.65,392.32 679.10,393.92 703.55,391.47 728.00,392.57 752.45,390.12 776.90,389.62 801.35,391.96 825.80,391.96 850.25,389.62 874.70,381.53 874.70,500.3" fill="#ccf7c8"/>
<polyline points="581.30,500.30 605.75,397.23 630.20,392.57 654.65,392.32 679.10,393.92 703.55,391.47 728.00,392.57 752.45,390.12 776.90,389.62 801.35,391.96 825.80,391.96 850.25,389.62 874.70,381.53" fill="none" stroke="#55d455" stroke-width="0.8"/>
<polyline points="581.30,500.30 605.75,444.35 630.20,440.55 654.65,441.65 679.10,442.75 703.55,440.42 728.00,439.69 752.45,440.55 776.90,440.91 801.35,441.77 825.80,441.77 850.25,439.56 874.70,434.04" fill="none" stroke="#2ea2a8" stroke-width="0.8"/>
<circle cx="581.30" cy="500.30" r="1.3" fill="#2a9aa0"/>
<circle cx="605.75" cy="444.35" r="1.3" fill="#2a9aa0"/>
<circle cx="630.20" cy="440.55" r="1.3" fill="#2a9aa0"/>
<circle cx="654.65" cy="441.65" r="1.3" fill="#2a9aa0"/>
<circle cx="679.10" cy="442.75" r="1.3" fill="#2a9aa0"/>
<circle cx="703.55" cy="440.42" r="1.3" fill="#2a9aa0"/>
<circle cx="728.00" cy="439.69" r="1.3" fill="#2a9aa0"/>
<circle cx="752.45" cy="440.55" r="1.3" fill="#2a9aa0"/>
<circle cx="776.90" cy="440.91" r="1.3" fill="#2a9aa0"/>
<circle cx="801.35" cy="441.77" r="1.3" fill="#2a9aa0"/>
<circle cx="825.80" cy="441.77" r="1.3" fill="#2a9aa0"/>
<circle cx="850.25" cy="439.56" r="1.3" fill="#2a9aa0"/>
<circle cx="874.70" cy="434.04" r="1.3" fill="#2a9aa0"/>
<polyline points="581.30,500.30 605.75,466.93 630.20,464.96 654.65,465.33 679.10,466.07 703.55,464.23 728.00,464.96 752.45,464.23 776.90,463.74 801.35,464.84 825.80,464.72 850.25,462.63 874.70,460.55" fill="none" stroke="#4fd8e0" stroke-width="0.8"/>
<circle cx="581.30" cy="500.30" r="1.3" fill="#45d0da"/>
<circle cx="605.75" cy="466.93" r="1.3" fill="#45d0da"/>
<circle cx="630.20" cy="464.96" r="1.3" fill="#45d0da"/>
<circle cx="654.65" cy="465.33" r="1.3" fill="#45d0da"/>
<circle cx="679.10" cy="466.07" r="1.3" fill="#45d0da"/>
<circle cx="703.55" cy="464.23" r="1.3" fill="#45d0da"/>
<circle cx="728.00" cy="464.96" r="1.3" fill="#45d0da"/>
<circle cx="752.45" cy="464.23" r="1.3" fill="#45d0da"/>
<circle cx="776.90" cy="463.74" r="1.3" fill="#45d0da"/>
<circle cx="801.35" cy="464.84" r="1.3" fill="#45d0da"/>
<circle cx="825.80" cy="464.72" r="1.3" fill="#45d0da"/>
<circle cx="850.25" cy="462.63" r="1.3" fill="#45d0da"/>
<circle cx="874.70" cy="460.55" r="1.3" fill="#45d0da"/>
<polyline points="581.30,500.30 605.75,488.03 630.20,489.01 654.65,487.17 679.10,486.93 703.55,488.52 728.00,490.48 752.45,486.93 776.90,486.43 801.35,486.56 825.80,487.17 850.25,488.64 874.70,488.64" fill="none" stroke="#b05a2c" stroke-width="0.8"/>
<circle cx="581.30" cy="500.30" r="1.3" fill="#b02818"/>
<circle cx="605.75" cy="488.03" r="1.3" fill="#b02818"/>
<circle cx="630.20" cy="489.01" r="1.3" fill="#b02818"/>
<circle cx="654.65" cy="487.17" r="1.3" fill="#b02818"/>
<circle cx="679.10" cy="486.93" r="1.3" fill="#b02818"/>
<circle cx="703.55" cy="488.52" r="1.3" fill="#b02818"/>
<circle cx="728.00" cy="490.48" r="1.3" fill="#b02818"/>
<circle cx="752.45" cy="486.93" r="1.3" fill="#b02818"/>
<circle cx="776.90" cy="486.43" r="1.3" fill="#b02818"/>
<circle cx="801.35" cy="486.56" r="1.3" fill="#b02818"/>
<circle cx="825.80" cy="487.17" r="1.3" fill="#b02818"/>
<circle cx="850.25" cy="488.64" r="1.3" fill="#b02818"/>
<circle cx="874.70" cy="488.64" r="1.3" fill="#b02818"/>
<circle cx="581.30" cy="500.30" r="1.3" fill="#44c844"/>
<circle cx="605.75" cy="397.23" r="1.3" fill="#44c844"/>
<circle cx="630.20" cy="392.57" r="1.3" fill="#44c844"/>
<circle cx="654.65" cy="392.32" r="1.3" fill="#44c844"/>
<circle cx="679.10" cy="393.92" r="1.3" fill="#44c844"/>
<circle cx="703.55" cy="391.47" r="1.3" fill="#44c844"/>
<circle cx="728.00" cy="392.57" r="1.3" fill="#44c844"/>
<circle cx="752.45" cy="390.12" r="1.3" fill="#44c844"/>
<circle cx="776.90" cy="389.62" r="1.3" fill="#44c844"/>
<circle cx="801.35" cy="391.96" r="1.3" fill="#44c844"/>
<circle cx="825.80" cy="391.96" r="1.3" fill="#44c844"/>
<circle cx="850.25" cy="389.62" r="1.3" fill="#44c844"/>
<circle cx="874.70" cy="381.53" r="1.3" fill="#44c844"/>
<path d="M581.30 396.00 H923.60" stroke="#f0a050" stroke-width="1" stroke-dasharray="0.8 2.8"/>
<rect x="580.30" y="395.00" width="2.00" height="2.00" rx="0" fill="#e06820" />
<rect x="922.60" y="395.00" width="2.00" height="2.00" rx="0" fill="#e06820" />
<rect x="682.00" y="523.50" width="4.30" height="4.30" rx="0" fill="#e07b39" />
<text x="688.80" y="527.60" font-size="5.6" fill="#222" font-weight="bold" text-anchor="start" font-style="normal" >KPI</text>
<rect x="702.50" y="523.50" width="4.30" height="4.30" rx="0" fill="#3ccc3c" />
<text x="709.30" y="527.60" font-size="5.6" fill="#222" font-weight="bold" text-anchor="start" font-style="normal" >Assignment</text>
<rect x="745.80" y="523.50" width="4.30" height="4.30" rx="0" fill="#2a9aa0" />
<text x="752.00" y="527.60" font-size="5.6" fill="#222" font-weight="bold" text-anchor="start" font-style="normal" >Travel</text>
<rect x="773.40" y="523.50" width="4.30" height="4.30" rx="0" fill="#45d0da" />
<text x="780.80" y="527.60" font-size="5.6" fill="#222" font-weight="bold" text-anchor="start" font-style="normal" >Picking</text>
<rect x="804.60" y="523.50" width="4.30" height="4.30" rx="0" fill="#c0141a" />
<text x="811.30" y="527.60" font-size="5.6" fill="#222" font-weight="bold" text-anchor="start" font-style="normal" >Other</text>
<text x="971.30" y="215.70" font-size="7.0" fill="#3d3d3d" font-weight="normal" text-anchor="start" font-style="normal" >Operators</text>
<rect x="971.00" y="218.20" width="411.00" height="13.70" rx="0" fill="#7c7b7b" />
<text x="973.40" y="226.40" font-size="5.1" fill="#f2f2f2" font-weight="bold" text-anchor="start" font-style="normal" >Operator</text>
<rect x="1017.40" y="218.20" width="0.80" height="13.70" rx="0" fill="#9a9999" />
<text x="1019.80" y="226.40" font-size="5.1" fill="#f2f2f2" font-weight="bold" text-anchor="start" font-style="normal" >Quota</text>
<rect x="1077.00" y="218.20" width="0.80" height="13.70" rx="0" fill="#9a9999" />
<text x="1079.40" y="226.40" font-size="5.1" fill="#f2f2f2" font-weight="bold" text-anchor="start" font-style="normal" >Lines</text>
<rect x="1107.40" y="218.20" width="0.80" height="13.70" rx="0" fill="#9a9999" />
<text x="1109.80" y="226.40" font-size="5.1" fill="#f2f2f2" font-weight="bold" text-anchor="start" font-style="normal" >Pieces</text>
<rect x="1141.50" y="218.20" width="0.80" height="13.70" rx="0" fill="#9a9999" />
<text x="1143.90" y="226.40" font-size="5.1" fill="#f2f2f2" font-weight="bold" text-anchor="start" font-style="normal" >Shorts</text>
<rect x="1175.60" y="218.20" width="0.80" height="13.70" rx="0" fill="#9a9999" />
<text x="1178.00" y="226.40" font-size="5.1" fill="#f2f2f2" font-weight="bold" text-anchor="start" font-style="normal" >More</text>
<rect x="1205.40" y="218.20" width="0.80" height="13.70" rx="0" fill="#9a9999" />
<text x="1207.80" y="226.40" font-size="5.1" fill="#f2f2f2" font-weight="bold" text-anchor="start" font-style="normal" >Repl</text>
<rect x="1232.70" y="218.20" width="0.80" height="13.70" rx="0" fill="#9a9999" />
<text x="1235.10" y="226.40" font-size="5.1" fill="#f2f2f2" font-weight="bold" text-anchor="start" font-style="normal" >Voice</text>
<rect x="1263.20" y="218.20" width="0.80" height="13.70" rx="0" fill="#9a9999" />
<text x="1265.60" y="226.40" font-size="5.1" fill="#f2f2f2" font-weight="bold" text-anchor="start" font-style="normal" >Scan</text>
<rect x="1292.50" y="218.20" width="0.80" height="13.70" rx="0" fill="#9a9999" />
<text x="1294.90" y="226.40" font-size="5.1" fill="#f2f2f2" font-weight="bold" text-anchor="start" font-style="normal" >Key</text>
<rect x="1318.20" y="218.20" width="0.80" height="13.70" rx="0" fill="#9a9999" />
<text x="1320.60" y="226.40" font-size="5.1" fill="#f2f2f2" font-weight="bold" text-anchor="start" font-style="normal" >Err %</text>
<rect x="1347.60" y="218.20" width="0.80" height="13.70" rx="0" fill="#9a9999" />
<text x="1350.00" y="226.40" font-size="5.1" fill="#f2f2f2" font-weight="bold" text-anchor="start" font-style="normal" >Assign</text>
<rect x="971.00" y="231.90" width="411.00" height="13.20" rx="0" fill="#f7f9fa" />
<text x="973.20" y="241.10" font-size="8.1" fill="#3d8a98" font-weight="normal" text-anchor="start" font-style="normal" >Nick</text>
<rect x="1019.20" y="234.10" width="45.00" height="8.60" rx="0" fill="#dadbdc" />
<rect x="1019.20" y="234.10" width="15.75" height="8.60" rx="0" fill="#17a0ad" />
<text x="1024.20" y="240.20" font-size="5.0" fill="#f4fbfc" font-weight="bold" text-anchor="start" font-style="normal" >35</text>
<text x="1079.70" y="241.10" font-size="8.1" fill="#1e1e1e" font-weight="normal" text-anchor="start" font-style="normal" >245</text>
<text x="1109.30" y="241.10" font-size="8.1" fill="#1e1e1e" font-weight="normal" text-anchor="start" font-style="normal" >740</text>
<text x="1144.20" y="241.10" font-size="8.1" fill="#e57e3c" font-weight="normal" text-anchor="start" font-style="normal" >1</text>
<rect x="1178.20" y="239.00" width="1.10" height="1.10" rx="0" fill="#555" />
<text x="1207.80" y="241.10" font-size="8.1" fill="#4a1e22" font-weight="normal" text-anchor="start" font-style="normal" >2</text>
<text x="1235.00" y="240.80" font-size="6.6" fill="#3a3a3a" font-weight="normal" text-anchor="start" font-style="italic" >234</text>
<text x="1266.10" y="240.80" font-size="6.6" fill="#3a3a3a" font-weight="normal" text-anchor="start" font-style="italic" >2</text>
<text x="1295.00" y="240.80" font-size="6.6" fill="#3a3a3a" font-weight="normal" text-anchor="start" font-style="italic" >9</text>
<text x="1320.30" y="241.10" font-size="8.1" fill="#e45050" font-weight="normal" text-anchor="start" font-style="normal" >2.45</text>
<text x="1349.20" y="240.80" font-size="6.6" fill="#2a2a2a" font-weight="normal" text-anchor="start" font-style="normal" >30</text>
<text x="973.20" y="254.30" font-size="8.1" fill="#3d8a98" font-weight="normal" text-anchor="start" font-style="normal" >Samuel</text>
<rect x="1019.20" y="247.30" width="45.00" height="8.60" rx="0" fill="#dadbdc" />
<rect x="1019.20" y="247.30" width="32.40" height="8.60" rx="0" fill="#17a0ad" />
<text x="1024.20" y="253.40" font-size="5.0" fill="#f4fbfc" font-weight="bold" text-anchor="start" font-style="normal" >72</text>
<text x="1079.70" y="254.30" font-size="8.1" fill="#1e1e1e" font-weight="normal" text-anchor="start" font-style="normal" >505</text>
<text x="1109.30" y="254.30" font-size="8.1" fill="#1e1e1e" font-weight="normal" text-anchor="start" font-style="normal" >1523</text>
<text x="1144.20" y="254.30" font-size="8.1" fill="#e57e3c" font-weight="normal" text-anchor="start" font-style="normal" >4</text>
<rect x="1178.20" y="252.20" width="1.10" height="1.10" rx="0" fill="#555" />
<text x="1207.80" y="254.30" font-size="8.1" fill="#4a1e22" font-weight="normal" text-anchor="start" font-style="normal" >3</text>
<text x="1235.00" y="254.00" font-size="6.6" fill="#3a3a3a" font-weight="normal" text-anchor="start" font-style="italic" >481</text>
<text x="1266.10" y="254.00" font-size="6.6" fill="#3a3a3a" font-weight="normal" text-anchor="start" font-style="italic" >7</text>
<text x="1295.00" y="254.00" font-size="6.6" fill="#3a3a3a" font-weight="normal" text-anchor="start" font-style="italic" >17</text>
<text x="1320.30" y="254.30" font-size="8.1" fill="#e45050" font-weight="normal" text-anchor="start" font-style="normal" >1.39</text>
<text x="1349.20" y="254.00" font-size="6.6" fill="#2a2a2a" font-weight="normal" text-anchor="start" font-style="normal" >67</text>
<rect x="971.00" y="258.30" width="411.00" height="13.20" rx="0" fill="#f7f9fa" />
<text x="973.20" y="267.50" font-size="8.1" fill="#3d8a98" font-weight="normal" text-anchor="start" font-style="normal" >Matthew</text>
<rect x="1019.20" y="260.50" width="45.00" height="8.60" rx="0" fill="#dadbdc" />
<rect x="1019.20" y="260.50" width="31.95" height="8.60" rx="0" fill="#17a0ad" />
<text x="1024.20" y="266.60" font-size="5.0" fill="#f4fbfc" font-weight="bold" text-anchor="start" font-style="normal" >71</text>
<text x="1079.70" y="267.50" font-size="8.1" fill="#1e1e1e" font-weight="normal" text-anchor="start" font-style="normal" >500</text>
<text x="1109.30" y="267.50" font-size="8.1" fill="#1e1e1e" font-weight="normal" text-anchor="start" font-style="normal" >1492</text>
<text x="1144.20" y="267.50" font-size="8.1" fill="#e57e3c" font-weight="normal" text-anchor="start" font-style="normal" >5</text>
<rect x="1178.20" y="265.40" width="1.10" height="1.10" rx="0" fill="#555" />
<text x="1207.80" y="267.50" font-size="8.1" fill="#4a1e22" font-weight="normal" text-anchor="start" font-style="normal" >3</text>
<text x="1235.00" y="267.20" font-size="6.6" fill="#3a3a3a" font-weight="normal" text-anchor="start" font-style="italic" >484</text>
<text x="1266.10" y="267.20" font-size="6.6" fill="#3a3a3a" font-weight="normal" text-anchor="start" font-style="italic" >2</text>
<text x="1295.00" y="267.20" font-size="6.6" fill="#3a3a3a" font-weight="normal" text-anchor="start" font-style="italic" >14</text>
<text x="1320.30" y="267.50" font-size="8.1" fill="#e45050" font-weight="normal" text-anchor="start" font-style="normal" >1</text>
<text x="1349.20" y="267.20" font-size="6.6" fill="#2a2a2a" font-weight="normal" text-anchor="start" font-style="normal" >61</text>
<text x="973.20" y="280.70" font-size="8.1" fill="#3d8a98" font-weight="normal" text-anchor="start" font-style="normal" >John</text>
<rect x="1019.20" y="273.70" width="45.00" height="8.60" rx="0" fill="#dadbdc" />
<rect x="1019.20" y="273.70" width="29.25" height="8.60" rx="0" fill="#17a0ad" />
<text x="1024.20" y="279.80" font-size="5.0" fill="#f4fbfc" font-weight="bold" text-anchor="start" font-style="normal" >65</text>
<text x="1079.70" y="280.70" font-size="8.1" fill="#1e1e1e" font-weight="normal" text-anchor="start" font-style="normal" >458</text>
<text x="1109.30" y="280.70" font-size="8.1" fill="#1e1e1e" font-weight="normal" text-anchor="start" font-style="normal" >1356</text>
<text x="1144.20" y="280.70" font-size="8.1" fill="#e57e3c" font-weight="normal" text-anchor="start" font-style="normal" >7</text>
<rect x="1178.20" y="278.60" width="1.10" height="1.10" rx="0" fill="#555" />
<rect x="1207.60" y="278.60" width="1.10" height="1.10" rx="0" fill="#555" />
<text x="1235.00" y="280.40" font-size="6.6" fill="#3a3a3a" font-weight="normal" text-anchor="start" font-style="italic" >444</text>
<text x="1266.10" y="280.40" font-size="6.6" fill="#3a3a3a" font-weight="normal" text-anchor="start" font-style="italic" >6</text>
<text x="1295.00" y="280.40" font-size="6.6" fill="#3a3a3a" font-weight="normal" text-anchor="start" font-style="italic" >8</text>
<text x="1320.30" y="280.70" font-size="8.1" fill="#e45050" font-weight="normal" text-anchor="start" font-style="normal" >1.09</text>
<text x="1349.20" y="280.40" font-size="6.6" fill="#2a2a2a" font-weight="normal" text-anchor="start" font-style="normal" >65</text>
<rect x="971.00" y="284.70" width="411.00" height="13.20" rx="0" fill="#f7f9fa" />
<text x="973.20" y="293.90" font-size="8.1" fill="#3d8a98" font-weight="normal" text-anchor="start" font-style="normal" >Addison</text>
<rect x="1019.20" y="286.90" width="45.00" height="8.60" rx="0" fill="#dadbdc" />
<rect x="1019.20" y="286.90" width="31.50" height="8.60" rx="0" fill="#17a0ad" />
<text x="1024.20" y="293.00" font-size="5.0" fill="#f4fbfc" font-weight="bold" text-anchor="start" font-style="normal" >70</text>
<text x="1079.70" y="293.90" font-size="8.1" fill="#1e1e1e" font-weight="normal" text-anchor="start" font-style="normal" >488</text>
<text x="1109.30" y="293.90" font-size="8.1" fill="#1e1e1e" font-weight="normal" text-anchor="start" font-style="normal" >1455</text>
<text x="1144.20" y="293.90" font-size="8.1" fill="#e57e3c" font-weight="normal" text-anchor="start" font-style="normal" >3</text>
<rect x="1178.20" y="291.80" width="1.10" height="1.10" rx="0" fill="#555" />
<text x="1207.80" y="293.90" font-size="8.1" fill="#4a1e22" font-weight="normal" text-anchor="start" font-style="normal" >1</text>
<text x="1235.00" y="293.60" font-size="6.6" fill="#3a3a3a" font-weight="normal" text-anchor="start" font-style="italic" >463</text>
<text x="1266.10" y="293.60" font-size="6.6" fill="#3a3a3a" font-weight="normal" text-anchor="start" font-style="italic" >5</text>
<text x="1295.00" y="293.60" font-size="6.6" fill="#3a3a3a" font-weight="normal" text-anchor="start" font-style="italic" >20</text>
<text x="1320.30" y="293.90" font-size="8.1" fill="#e45050" font-weight="normal" text-anchor="start" font-style="normal" >1.48</text>
<text x="1349.20" y="293.60" font-size="6.6" fill="#2a2a2a" font-weight="normal" text-anchor="start" font-style="normal" >67</text>
<text x="973.20" y="307.10" font-size="8.1" fill="#3d8a98" font-weight="normal" text-anchor="start" font-style="normal" >Clark</text>
<rect x="1019.20" y="300.10" width="45.00" height="8.60" rx="0" fill="#dadbdc" />
<rect x="1019.20" y="300.10" width="29.25" height="8.60" rx="0" fill="#17a0ad" />
<text x="1024.20" y="306.20" font-size="5.0" fill="#f4fbfc" font-weight="bold" text-anchor="start" font-style="normal" >65</text>
<text x="1079.70" y="307.10" font-size="8.1" fill="#1e1e1e" font-weight="normal" text-anchor="start" font-style="normal" >457</text>
<text x="1109.30" y="307.10" font-size="8.1" fill="#1e1e1e" font-weight="normal" text-anchor="start" font-style="normal" >1335</text>
<text x="1144.20" y="307.10" font-size="8.1" fill="#e57e3c" font-weight="normal" text-anchor="start" font-style="normal" >4</text>
<rect x="1178.20" y="305.00" width="1.10" height="1.10" rx="0" fill="#555" />
<text x="1207.80" y="307.10" font-size="8.1" fill="#4a1e22" font-weight="normal" text-anchor="start" font-style="normal" >2</text>
<text x="1235.00" y="306.80" font-size="6.6" fill="#3a3a3a" font-weight="normal" text-anchor="start" font-style="italic" >443</text>
<text x="1266.10" y="306.80" font-size="6.6" fill="#3a3a3a" font-weight="normal" text-anchor="start" font-style="italic" >4</text>
<text x="1295.00" y="306.80" font-size="6.6" fill="#3a3a3a" font-weight="normal" text-anchor="start" font-style="italic" >9</text>
<text x="1320.30" y="307.10" font-size="8.1" fill="#e45050" font-weight="normal" text-anchor="start" font-style="normal" >1.53</text>
<text x="1349.20" y="306.80" font-size="6.6" fill="#2a2a2a" font-weight="normal" text-anchor="start" font-style="normal" >61</text>
<rect x="971.00" y="311.10" width="411.00" height="13.20" rx="0" fill="#f7f9fa" />
<text x="973.20" y="320.30" font-size="8.1" fill="#3d8a98" font-weight="normal" text-anchor="start" font-style="normal" >Farrah</text>
<rect x="1019.20" y="313.30" width="45.00" height="8.60" rx="0" fill="#dadbdc" />
<rect x="1019.20" y="313.30" width="31.95" height="8.60" rx="0" fill="#17a0ad" />
<text x="1024.20" y="319.40" font-size="5.0" fill="#f4fbfc" font-weight="bold" text-anchor="start" font-style="normal" >71</text>
<text x="1079.70" y="320.30" font-size="8.1" fill="#1e1e1e" font-weight="normal" text-anchor="start" font-style="normal" >496</text>
<text x="1109.30" y="320.30" font-size="8.1" fill="#1e1e1e" font-weight="normal" text-anchor="start" font-style="normal" >1509</text>
<text x="1144.20" y="320.30" font-size="8.1" fill="#e57e3c" font-weight="normal" text-anchor="start" font-style="normal" >3</text>
<rect x="1178.20" y="318.20" width="1.10" height="1.10" rx="0" fill="#555" />
<text x="1207.80" y="320.30" font-size="8.1" fill="#4a1e22" font-weight="normal" text-anchor="start" font-style="normal" >6</text>
<text x="1235.00" y="320.00" font-size="6.6" fill="#3a3a3a" font-weight="normal" text-anchor="start" font-style="italic" >477</text>
<text x="1266.10" y="320.00" font-size="6.6" fill="#3a3a3a" font-weight="normal" text-anchor="start" font-style="italic" >5</text>
<text x="1295.00" y="320.00" font-size="6.6" fill="#3a3a3a" font-weight="normal" text-anchor="start" font-style="italic" >14</text>
<text x="1320.30" y="320.30" font-size="8.1" fill="#e45050" font-weight="normal" text-anchor="start" font-style="normal" >1.21</text>
<text x="1349.20" y="320.00" font-size="6.6" fill="#2a2a2a" font-weight="normal" text-anchor="start" font-style="normal" >68</text>
<text x="973.20" y="333.50" font-size="8.1" fill="#3d8a98" font-weight="normal" text-anchor="start" font-style="normal" >Jeremy</text>
<rect x="1019.20" y="326.50" width="45.00" height="8.60" rx="0" fill="#dadbdc" />
<rect x="1019.20" y="326.50" width="30.60" height="8.60" rx="0" fill="#17a0ad" />
<text x="1024.20" y="332.60" font-size="5.0" fill="#f4fbfc" font-weight="bold" text-anchor="start" font-style="normal" >68</text>
<text x="1079.70" y="333.50" font-size="8.1" fill="#1e1e1e" font-weight="normal" text-anchor="start" font-style="normal" >476</text>
<text x="1109.30" y="333.50" font-size="8.1" fill="#1e1e1e" font-weight="normal" text-anchor="start" font-style="normal" >1449</text>
<text x="1144.20" y="333.50" font-size="8.1" fill="#e57e3c" font-weight="normal" text-anchor="start" font-style="normal" >3</text>
<rect x="1178.20" y="331.40" width="1.10" height="1.10" rx="0" fill="#555" />
<text x="1207.80" y="333.50" font-size="8.1" fill="#4a1e22" font-weight="normal" text-anchor="start" font-style="normal" >4</text>
<text x="1235.00" y="333.20" font-size="6.6" fill="#3a3a3a" font-weight="normal" text-anchor="start" font-style="italic" >456</text>
<text x="1266.10" y="333.20" font-size="6.6" fill="#3a3a3a" font-weight="normal" text-anchor="start" font-style="italic" >4</text>
<text x="1295.00" y="333.20" font-size="6.6" fill="#3a3a3a" font-weight="normal" text-anchor="start" font-style="italic" >16</text>
<text x="1320.30" y="333.50" font-size="8.1" fill="#e45050" font-weight="normal" text-anchor="start" font-style="normal" >0.84</text>
<text x="1349.20" y="333.20" font-size="6.6" fill="#2a2a2a" font-weight="normal" text-anchor="start" font-style="normal" >65</text>
<rect x="971.00" y="337.50" width="411.00" height="13.20" rx="0" fill="#f7f9fa" />
<text x="973.20" y="346.70" font-size="8.1" fill="#3d8a98" font-weight="normal" text-anchor="start" font-style="normal" >Willard</text>
<rect x="1019.20" y="339.70" width="45.00" height="8.60" rx="0" fill="#dadbdc" />
<rect x="1019.20" y="339.70" width="31.05" height="8.60" rx="0" fill="#17a0ad" />
<text x="1024.20" y="345.80" font-size="5.0" fill="#f4fbfc" font-weight="bold" text-anchor="start" font-style="normal" >69</text>
<text x="1079.70" y="346.70" font-size="8.1" fill="#1e1e1e" font-weight="normal" text-anchor="start" font-style="normal" >483</text>
<text x="1109.30" y="346.70" font-size="8.1" fill="#1e1e1e" font-weight="normal" text-anchor="start" font-style="normal" >1386</text>
<text x="1144.20" y="346.70" font-size="8.1" fill="#e57e3c" font-weight="normal" text-anchor="start" font-style="normal" >8</text>
<rect x="1178.20" y="344.60" width="1.10" height="1.10" rx="0" fill="#555" />
<text x="1207.80" y="346.70" font-size="8.1" fill="#4a1e22" font-weight="normal" text-anchor="start" font-style="normal" >2</text>
<text x="1235.00" y="346.40" font-size="6.6" fill="#3a3a3a" font-weight="normal" text-anchor="start" font-style="italic" >459</text>
<text x="1266.10" y="346.40" font-size="6.6" fill="#3a3a3a" font-weight="normal" text-anchor="start" font-style="italic" >4</text>
<text x="1295.00" y="346.40" font-size="6.6" fill="#3a3a3a" font-weight="normal" text-anchor="start" font-style="italic" >20</text>
<text x="1320.30" y="346.70" font-size="8.1" fill="#e45050" font-weight="normal" text-anchor="start" font-style="normal" >0.62</text>
<text x="1349.20" y="346.40" font-size="6.6" fill="#2a2a2a" font-weight="normal" text-anchor="start" font-style="normal" >60</text>
<text x="973.20" y="359.90" font-size="8.1" fill="#3d8a98" font-weight="normal" text-anchor="start" font-style="normal" >Randa</text>
<rect x="1019.20" y="352.90" width="45.00" height="8.60" rx="0" fill="#dadbdc" />
<rect x="1019.20" y="352.90" width="34.20" height="8.60" rx="0" fill="#17a0ad" />
<text x="1024.20" y="359.00" font-size="5.0" fill="#f4fbfc" font-weight="bold" text-anchor="start" font-style="normal" >76</text>
<text x="1079.70" y="359.90" font-size="8.1" fill="#1e1e1e" font-weight="normal" text-anchor="start" font-style="normal" >529</text>
<text x="1109.30" y="359.90" font-size="8.1" fill="#1e1e1e" font-weight="normal" text-anchor="start" font-style="normal" >1630</text>
<text x="1144.20" y="359.90" font-size="8.1" fill="#e57e3c" font-weight="normal" text-anchor="start" font-style="normal" >5</text>
<rect x="1178.20" y="357.80" width="1.10" height="1.10" rx="0" fill="#555" />
<text x="1207.80" y="359.90" font-size="8.1" fill="#4a1e22" font-weight="normal" text-anchor="start" font-style="normal" >1</text>
<text x="1235.00" y="359.60" font-size="6.6" fill="#3a3a3a" font-weight="normal" text-anchor="start" font-style="italic" >496</text>
<text x="1266.10" y="359.60" font-size="6.6" fill="#3a3a3a" font-weight="normal" text-anchor="start" font-style="italic" >8</text>
<text x="1295.00" y="359.60" font-size="6.6" fill="#3a3a3a" font-weight="normal" text-anchor="start" font-style="italic" >25</text>
<text x="1320.30" y="359.90" font-size="8.1" fill="#e45050" font-weight="normal" text-anchor="start" font-style="normal" >1.13</text>
<text x="1349.20" y="359.60" font-size="6.6" fill="#2a2a2a" font-weight="normal" text-anchor="start" font-style="normal" >71</text>
<rect x="971.00" y="363.90" width="411.00" height="13.20" rx="0" fill="#f7f9fa" />
<text x="973.20" y="373.10" font-size="8.1" fill="#3d8a98" font-weight="normal" text-anchor="start" font-style="normal" >Johnatan</text>
<rect x="1019.20" y="366.10" width="45.00" height="8.60" rx="0" fill="#dadbdc" />
<rect x="1019.20" y="366.10" width="27.45" height="8.60" rx="0" fill="#17a0ad" />
<text x="1024.20" y="372.20" font-size="5.0" fill="#f4fbfc" font-weight="bold" text-anchor="start" font-style="normal" >61</text>
<text x="1079.70" y="373.10" font-size="8.1" fill="#1e1e1e" font-weight="normal" text-anchor="start" font-style="normal" >424</text>
<text x="1109.30" y="373.10" font-size="8.1" fill="#1e1e1e" font-weight="normal" text-anchor="start" font-style="normal" >1282</text>
<text x="1144.20" y="373.10" font-size="8.1" fill="#e57e3c" font-weight="normal" text-anchor="start" font-style="normal" >4</text>
<rect x="1178.20" y="371.00" width="1.10" height="1.10" rx="0" fill="#555" />
<text x="1207.80" y="373.10" font-size="8.1" fill="#4a1e22" font-weight="normal" text-anchor="start" font-style="normal" >6</text>
<text x="1235.00" y="372.80" font-size="6.6" fill="#3a3a3a" font-weight="normal" text-anchor="start" font-style="italic" >403</text>
<text x="1266.10" y="372.80" font-size="6.6" fill="#3a3a3a" font-weight="normal" text-anchor="start" font-style="italic" >8</text>
<text x="1295.00" y="372.80" font-size="6.6" fill="#3a3a3a" font-weight="normal" text-anchor="start" font-style="italic" >14</text>
<text x="1320.30" y="373.10" font-size="8.1" fill="#e45050" font-weight="normal" text-anchor="start" font-style="normal" >0.94</text>
<text x="1349.20" y="372.80" font-size="6.6" fill="#2a2a2a" font-weight="normal" text-anchor="start" font-style="normal" >55</text>
<text x="973.20" y="386.30" font-size="8.1" fill="#3d8a98" font-weight="normal" text-anchor="start" font-style="normal" >Marcel</text>
<rect x="1019.20" y="379.30" width="45.00" height="8.60" rx="0" fill="#dadbdc" />
<rect x="1019.20" y="379.30" width="32.85" height="8.60" rx="0" fill="#17a0ad" />
<text x="1024.20" y="385.40" font-size="5.0" fill="#f4fbfc" font-weight="bold" text-anchor="start" font-style="normal" >73</text>
<text x="1079.70" y="386.30" font-size="8.1" fill="#1e1e1e" font-weight="normal" text-anchor="start" font-style="normal" >513</text>
<text x="1109.30" y="386.30" font-size="8.1" fill="#1e1e1e" font-weight="normal" text-anchor="start" font-style="normal" >1502</text>
<text x="1144.20" y="386.30" font-size="8.1" fill="#e57e3c" font-weight="normal" text-anchor="start" font-style="normal" >3</text>
<rect x="1178.20" y="384.20" width="1.10" height="1.10" rx="0" fill="#555" />
<text x="1207.80" y="386.30" font-size="8.1" fill="#4a1e22" font-weight="normal" text-anchor="start" font-style="normal" >3</text>
<text x="1235.00" y="386.00" font-size="6.6" fill="#3a3a3a" font-weight="normal" text-anchor="start" font-style="italic" >490</text>
<text x="1266.10" y="386.00" font-size="6.6" fill="#3a3a3a" font-weight="normal" text-anchor="start" font-style="italic" >8</text>
<text x="1295.00" y="386.00" font-size="6.6" fill="#3a3a3a" font-weight="normal" text-anchor="start" font-style="italic" >15</text>
<text x="1320.30" y="386.30" font-size="8.1" fill="#e45050" font-weight="normal" text-anchor="start" font-style="normal" >0.39</text>
<text x="1349.20" y="386.00" font-size="6.6" fill="#2a2a2a" font-weight="normal" text-anchor="start" font-style="normal" >66</text>
<rect x="971.00" y="390.30" width="411.00" height="13.20" rx="0" fill="#f7f9fa" />
<text x="973.20" y="399.50" font-size="8.1" fill="#3d8a98" font-weight="normal" text-anchor="start" font-style="normal" >Eric</text>
<rect x="1019.20" y="392.50" width="45.00" height="8.60" rx="0" fill="#dadbdc" />
<rect x="1019.20" y="392.50" width="31.05" height="8.60" rx="0" fill="#17a0ad" />
<text x="1024.20" y="398.60" font-size="5.0" fill="#f4fbfc" font-weight="bold" text-anchor="start" font-style="normal" >69</text>
<text x="1079.70" y="399.50" font-size="8.1" fill="#1e1e1e" font-weight="normal" text-anchor="start" font-style="normal" >484</text>
<text x="1109.30" y="399.50" font-size="8.1" fill="#1e1e1e" font-weight="normal" text-anchor="start" font-style="normal" >1490</text>
<text x="1144.20" y="399.50" font-size="8.1" fill="#e57e3c" font-weight="normal" text-anchor="start" font-style="normal" >4</text>
<rect x="1178.20" y="397.40" width="1.10" height="1.10" rx="0" fill="#555" />
<text x="1207.80" y="399.50" font-size="8.1" fill="#4a1e22" font-weight="normal" text-anchor="start" font-style="normal" >1</text>
<text x="1235.00" y="399.20" font-size="6.6" fill="#3a3a3a" font-weight="normal" text-anchor="start" font-style="italic" >467</text>
<text x="1266.10" y="399.20" font-size="6.6" fill="#3a3a3a" font-weight="normal" text-anchor="start" font-style="italic" >2</text>
<text x="1295.00" y="399.20" font-size="6.6" fill="#3a3a3a" font-weight="normal" text-anchor="start" font-style="italic" >15</text>
<text x="1320.30" y="399.50" font-size="8.1" fill="#e45050" font-weight="normal" text-anchor="start" font-style="normal" >0.62</text>
<text x="1349.20" y="399.20" font-size="6.6" fill="#2a2a2a" font-weight="normal" text-anchor="start" font-style="normal" >65</text>
<text x="973.20" y="412.70" font-size="8.1" fill="#3d8a98" font-weight="normal" text-anchor="start" font-style="normal" >Jacques</text>
<rect x="1019.20" y="405.70" width="45.00" height="8.60" rx="0" fill="#dadbdc" />
<rect x="1019.20" y="405.70" width="32.40" height="8.60" rx="0" fill="#17a0ad" />
<text x="1024.20" y="411.80" font-size="5.0" fill="#f4fbfc" font-weight="bold" text-anchor="start" font-style="normal" >72</text>
<text x="1079.70" y="412.70" font-size="8.1" fill="#1e1e1e" font-weight="normal" text-anchor="start" font-style="normal" >503</text>
<text x="1109.30" y="412.70" font-size="8.1" fill="#1e1e1e" font-weight="normal" text-anchor="start" font-style="normal" >1507</text>
<text x="1144.20" y="412.70" font-size="8.1" fill="#e57e3c" font-weight="normal" text-anchor="start" font-style="normal" >5</text>
<rect x="1178.20" y="410.60" width="1.10" height="1.10" rx="0" fill="#555" />
<text x="1207.80" y="412.70" font-size="8.1" fill="#4a1e22" font-weight="normal" text-anchor="start" font-style="normal" >4</text>
<text x="1235.00" y="412.40" font-size="6.6" fill="#3a3a3a" font-weight="normal" text-anchor="start" font-style="italic" >480</text>
<text x="1266.10" y="412.40" font-size="6.6" fill="#3a3a3a" font-weight="normal" text-anchor="start" font-style="italic" >6</text>
<text x="1295.00" y="412.40" font-size="6.6" fill="#3a3a3a" font-weight="normal" text-anchor="start" font-style="italic" >17</text>
<text x="1320.30" y="412.70" font-size="8.1" fill="#e45050" font-weight="normal" text-anchor="start" font-style="normal" >1.19</text>
<text x="1349.20" y="412.40" font-size="6.6" fill="#2a2a2a" font-weight="normal" text-anchor="start" font-style="normal" >66</text>
<rect x="971.00" y="416.70" width="411.00" height="13.20" rx="0" fill="#f7f9fa" />
<text x="973.20" y="425.90" font-size="8.1" fill="#3d8a98" font-weight="normal" text-anchor="start" font-style="normal" >Jenna</text>
<rect x="1019.20" y="418.90" width="45.00" height="8.60" rx="0" fill="#dadbdc" />
<rect x="1019.20" y="418.90" width="31.95" height="8.60" rx="0" fill="#17a0ad" />
<text x="1024.20" y="425.00" font-size="5.0" fill="#f4fbfc" font-weight="bold" text-anchor="start" font-style="normal" >71</text>
<text x="1079.70" y="425.90" font-size="8.1" fill="#1e1e1e" font-weight="normal" text-anchor="start" font-style="normal" >496</text>
<text x="1109.30" y="425.90" font-size="8.1" fill="#1e1e1e" font-weight="normal" text-anchor="start" font-style="normal" >1502</text>
<text x="1144.20" y="425.90" font-size="8.1" fill="#e57e3c" font-weight="normal" text-anchor="start" font-style="normal" >5</text>
<rect x="1178.20" y="423.80" width="1.10" height="1.10" rx="0" fill="#555" />
<text x="1207.80" y="425.90" font-size="8.1" fill="#4a1e22" font-weight="normal" text-anchor="start" font-style="normal" >1</text>
<text x="1235.00" y="425.60" font-size="6.6" fill="#3a3a3a" font-weight="normal" text-anchor="start" font-style="italic" >473</text>
<text x="1266.10" y="425.60" font-size="6.6" fill="#3a3a3a" font-weight="normal" text-anchor="start" font-style="italic" >2</text>
<text x="1295.00" y="425.60" font-size="6.6" fill="#3a3a3a" font-weight="normal" text-anchor="start" font-style="italic" >21</text>
<text x="1320.30" y="425.90" font-size="8.1" fill="#e45050" font-weight="normal" text-anchor="start" font-style="normal" >0.60</text>
<text x="1349.20" y="425.60" font-size="6.6" fill="#2a2a2a" font-weight="normal" text-anchor="start" font-style="normal" >65</text>
<text x="973.20" y="439.10" font-size="8.1" fill="#3d8a98" font-weight="normal" text-anchor="start" font-style="normal" >Patrick</text>
<rect x="1019.20" y="432.10" width="45.00" height="8.60" rx="0" fill="#dadbdc" />
<rect x="1019.20" y="432.10" width="28.80" height="8.60" rx="0" fill="#17a0ad" />
<text x="1024.20" y="438.20" font-size="5.0" fill="#f4fbfc" font-weight="bold" text-anchor="start" font-style="normal" >64</text>
<text x="1079.70" y="439.10" font-size="8.1" fill="#1e1e1e" font-weight="normal" text-anchor="start" font-style="normal" >450</text>
<text x="1109.30" y="439.10" font-size="8.1" fill="#1e1e1e" font-weight="normal" text-anchor="start" font-style="normal" >1331</text>
<text x="1144.20" y="439.10" font-size="8.1" fill="#e57e3c" font-weight="normal" text-anchor="start" font-style="normal" >5</text>
<rect x="1178.20" y="437.00" width="1.10" height="1.10" rx="0" fill="#555" />
<text x="1207.80" y="439.10" font-size="8.1" fill="#4a1e22" font-weight="normal" text-anchor="start" font-style="normal" >1</text>
<text x="1235.00" y="438.80" font-size="6.6" fill="#3a3a3a" font-weight="normal" text-anchor="start" font-style="italic" >425</text>
<text x="1266.10" y="438.80" font-size="6.6" fill="#3a3a3a" font-weight="normal" text-anchor="start" font-style="italic" >6</text>
<text x="1295.00" y="438.80" font-size="6.6" fill="#3a3a3a" font-weight="normal" text-anchor="start" font-style="italic" >19</text>
<text x="1320.30" y="439.10" font-size="8.1" fill="#e45050" font-weight="normal" text-anchor="start" font-style="normal" >1.33</text>
<text x="1349.20" y="438.80" font-size="6.6" fill="#2a2a2a" font-weight="normal" text-anchor="start" font-style="normal" >61</text>
<rect x="971.00" y="443.10" width="411.00" height="13.20" rx="0" fill="#f7f9fa" />
<text x="973.20" y="452.30" font-size="8.1" fill="#3d8a98" font-weight="normal" text-anchor="start" font-style="normal" >Kevin</text>
<rect x="1019.20" y="445.30" width="45.00" height="8.60" rx="0" fill="#dadbdc" />
<rect x="1019.20" y="445.30" width="29.70" height="8.60" rx="0" fill="#17a0ad" />
<text x="1024.20" y="451.40" font-size="5.0" fill="#f4fbfc" font-weight="bold" text-anchor="start" font-style="normal" >66</text>
<text x="1079.70" y="452.30" font-size="8.1" fill="#1e1e1e" font-weight="normal" text-anchor="start" font-style="normal" >460</text>
<text x="1109.30" y="452.30" font-size="8.1" fill="#1e1e1e" font-weight="normal" text-anchor="start" font-style="normal" >1359</text>
<text x="1144.20" y="452.30" font-size="8.1" fill="#e57e3c" font-weight="normal" text-anchor="start" font-style="normal" >5</text>
<rect x="1178.20" y="450.20" width="1.10" height="1.10" rx="0" fill="#555" />
<text x="1207.80" y="452.30" font-size="8.1" fill="#4a1e22" font-weight="normal" text-anchor="start" font-style="normal" >2</text>
<text x="1235.00" y="452.00" font-size="6.6" fill="#3a3a3a" font-weight="normal" text-anchor="start" font-style="italic" >441</text>
<text x="1266.10" y="452.00" font-size="6.6" fill="#3a3a3a" font-weight="normal" text-anchor="start" font-style="italic" >3</text>
<text x="1295.00" y="452.00" font-size="6.6" fill="#3a3a3a" font-weight="normal" text-anchor="start" font-style="italic" >16</text>
<text x="1320.30" y="452.30" font-size="8.1" fill="#e45050" font-weight="normal" text-anchor="start" font-style="normal" >0.43</text>
<text x="1349.20" y="452.00" font-size="6.6" fill="#2a2a2a" font-weight="normal" text-anchor="start" font-style="normal" >60</text>
<text x="973.20" y="465.50" font-size="8.1" fill="#3d8a98" font-weight="normal" text-anchor="start" font-style="normal" >Kilian</text>
<rect x="1019.20" y="458.50" width="45.00" height="8.60" rx="0" fill="#dadbdc" />
<rect x="1019.20" y="458.50" width="30.60" height="8.60" rx="0" fill="#17a0ad" />
<text x="1024.20" y="464.60" font-size="5.0" fill="#f4fbfc" font-weight="bold" text-anchor="start" font-style="normal" >68</text>
<text x="1079.70" y="465.50" font-size="8.1" fill="#1e1e1e" font-weight="normal" text-anchor="start" font-style="normal" >473</text>
<text x="1109.30" y="465.50" font-size="8.1" fill="#1e1e1e" font-weight="normal" text-anchor="start" font-style="normal" >1432</text>
<text x="1144.20" y="465.50" font-size="8.1" fill="#e57e3c" font-weight="normal" text-anchor="start" font-style="normal" >4</text>
<rect x="1178.20" y="463.40" width="1.10" height="1.10" rx="0" fill="#555" />
<text x="1207.80" y="465.50" font-size="8.1" fill="#4a1e22" font-weight="normal" text-anchor="start" font-style="normal" >1</text>
<text x="1235.00" y="465.20" font-size="6.6" fill="#3a3a3a" font-weight="normal" text-anchor="start" font-style="italic" >458</text>
<text x="1266.10" y="465.20" font-size="6.6" fill="#3a3a3a" font-weight="normal" text-anchor="start" font-style="italic" >3</text>
<text x="1295.00" y="465.20" font-size="6.6" fill="#3a3a3a" font-weight="normal" text-anchor="start" font-style="italic" >12</text>
<text x="1320.30" y="465.50" font-size="8.1" fill="#e45050" font-weight="normal" text-anchor="start" font-style="normal" >1.06</text>
<text x="1349.20" y="465.20" font-size="6.6" fill="#2a2a2a" font-weight="normal" text-anchor="start" font-style="normal" >64</text>
<rect x="971.00" y="469.50" width="411.00" height="13.20" rx="0" fill="#f7f9fa" />
<text x="973.20" y="478.70" font-size="8.1" fill="#3d8a98" font-weight="normal" text-anchor="start" font-style="normal" >William</text>
<rect x="1019.20" y="471.70" width="45.00" height="8.60" rx="0" fill="#dadbdc" />
<rect x="1019.20" y="471.70" width="30.60" height="8.60" rx="0" fill="#17a0ad" />
<text x="1024.20" y="477.80" font-size="5.0" fill="#f4fbfc" font-weight="bold" text-anchor="start" font-style="normal" >68</text>
<text x="1079.70" y="478.70" font-size="8.1" fill="#1e1e1e" font-weight="normal" text-anchor="start" font-style="normal" >474</text>
<text x="1109.30" y="478.70" font-size="8.1" fill="#1e1e1e" font-weight="normal" text-anchor="start" font-style="normal" >1453</text>
<text x="1144.20" y="478.70" font-size="8.1" fill="#e57e3c" font-weight="normal" text-anchor="start" font-style="normal" >8</text>
<rect x="1178.20" y="476.60" width="1.10" height="1.10" rx="0" fill="#555" />
<rect x="1207.60" y="476.60" width="1.10" height="1.10" rx="0" fill="#555" />
<text x="1235.00" y="478.40" font-size="6.6" fill="#3a3a3a" font-weight="normal" text-anchor="start" font-style="italic" >451</text>
<text x="1266.10" y="478.40" font-size="6.6" fill="#3a3a3a" font-weight="normal" text-anchor="start" font-style="italic" >4</text>
<text x="1295.00" y="478.40" font-size="6.6" fill="#3a3a3a" font-weight="normal" text-anchor="start" font-style="italic" >19</text>
<text x="1320.30" y="478.70" font-size="8.1" fill="#e45050" font-weight="normal" text-anchor="start" font-style="normal" >1.69</text>
<text x="1349.20" y="478.40" font-size="6.6" fill="#2a2a2a" font-weight="normal" text-anchor="start" font-style="normal" >62</text>
<text x="973.20" y="491.90" font-size="8.1" fill="#3d8a98" font-weight="normal" text-anchor="start" font-style="normal" >Rodolf</text>
<rect x="1019.20" y="484.90" width="45.00" height="8.60" rx="0" fill="#dadbdc" />
<rect x="1019.20" y="484.90" width="17.55" height="8.60" rx="0" fill="#17a0ad" />
<text x="1024.20" y="491.00" font-size="5.0" fill="#f4fbfc" font-weight="bold" text-anchor="start" font-style="normal" >39</text>
<text x="1079.70" y="491.90" font-size="8.1" fill="#1e1e1e" font-weight="normal" text-anchor="start" font-style="normal" >270</text>
<text x="1109.30" y="491.90" font-size="8.1" fill="#1e1e1e" font-weight="normal" text-anchor="start" font-style="normal" >838</text>
<text x="1144.20" y="491.90" font-size="8.1" fill="#e57e3c" font-weight="normal" text-anchor="start" font-style="normal" >2</text>
<rect x="1178.20" y="489.80" width="1.10" height="1.10" rx="0" fill="#555" />
<rect x="1207.60" y="489.80" width="1.10" height="1.10" rx="0" fill="#555" />
<text x="1235.00" y="491.60" font-size="6.6" fill="#3a3a3a" font-weight="normal" text-anchor="start" font-style="italic" >261</text>
<text x="1266.10" y="491.60" font-size="6.6" fill="#3a3a3a" font-weight="normal" text-anchor="start" font-style="italic" >1</text>
<text x="1295.00" y="491.60" font-size="6.6" fill="#3a3a3a" font-weight="normal" text-anchor="start" font-style="italic" >8</text>
<text x="1320.30" y="491.90" font-size="8.1" fill="#e45050" font-weight="normal" text-anchor="start" font-style="normal" >0.74</text>
<text x="1349.20" y="491.60" font-size="6.6" fill="#2a2a2a" font-weight="normal" text-anchor="start" font-style="normal" >35</text>
</svg>

</body></html>
